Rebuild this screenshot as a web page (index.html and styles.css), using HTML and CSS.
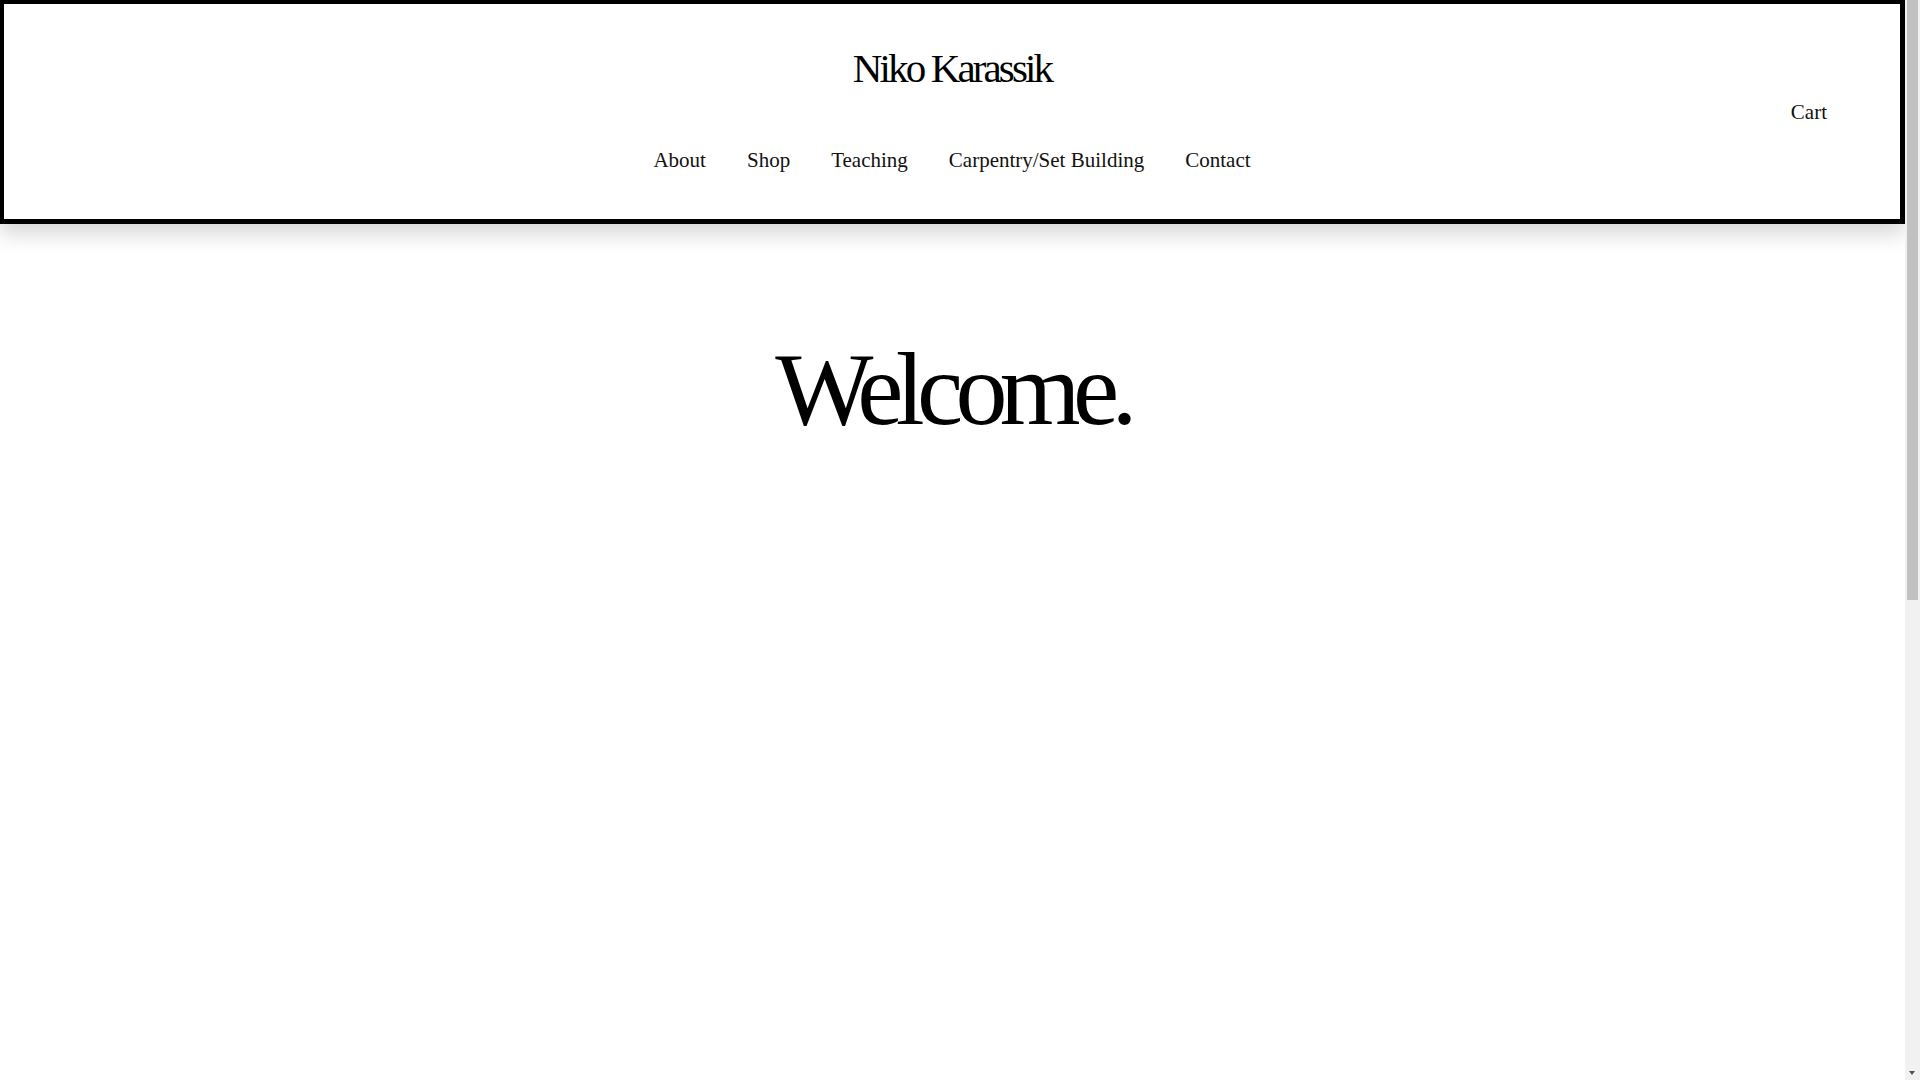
FILE: index.html
```html
<!DOCTYPE html>
<html lang="en">
<head>
<meta charset="utf-8">
<title>Niko Karassik</title>
<link rel="stylesheet" href="styles.css">
</head>
<body>
<div class="page">
  <header class="site-header">
    <h1 class="site-title"><a href="#">Niko Karassik</a></h1>
    <div class="cart-row"><a class="cart" href="#">Cart</a></div>
    <nav class="main-nav">
      <a href="#">About</a>
      <a href="#">Shop</a>
      <a href="#">Teaching</a>
      <a href="#">Carpentry/Set Building</a>
      <a href="#">Contact</a>
    </nav>
  </header>
  <main class="content">
    <h2 class="welcome">Welcome.</h2>
  </main>
</div>
<div class="scrollbar" aria-hidden="true">
  <div class="scroll-thumb"></div>
  <div class="scroll-arrow"></div>
</div>
</body>
</html>
```
FILE: styles.css
```css
html, body {
  margin: 0;
  padding: 0;
  background: #fff;
}
body {
  font-family: "Liberation Serif", "Times New Roman", serif;
  color: #000;
  overflow: hidden;
}
a {
  color: inherit;
  text-decoration: none;
}
.page {
  width: calc(100% - 15px);
}
.site-header {
  border-style: solid;
  border-color: #000;
  border-width: 4px 5px 5px 4px;
  padding: 44px 0 48px;
  box-shadow: 0 10px 20px rgba(0, 0, 0, 0.16);
}
.site-title {
  margin: 0;
  text-align: center;
  font-weight: normal;
  font-size: 41px;
  line-height: 41px;
  letter-spacing: -0.07em;
}
.cart-row {
  display: flex;
  justify-content: flex-end;
  margin-top: 13px;
  padding-right: 73px;
}
.cart {
  font-size: 21px;
  line-height: 21px;
  color: #111;
}
.main-nav {
  display: flex;
  justify-content: center;
  gap: 41px;
  margin-top: 27px;
  font-size: 21px;
  line-height: 21px;
  color: #111;
}
.content {
  padding-top: 113px;
}
.welcome {
  margin: 0;
  text-align: center;
  font-weight: normal;
  font-size: 104px;
  line-height: 104px;
  letter-spacing: -0.074em;
}
.scrollbar {
  position: fixed;
  top: 0;
  right: 0;
  width: 15px;
  height: 100%;
  background: #f1f1f1;
}
.scroll-thumb {
  margin-left: 2px;
  width: 11px;
  height: 600px;
  background: #c1c1c1;
}
.scroll-arrow {
  position: absolute;
  left: 4px;
  bottom: 5px;
  width: 0;
  height: 0;
  border-left: 3.5px solid transparent;
  border-right: 3.5px solid transparent;
  border-top: 4px solid #505050;
}
```
